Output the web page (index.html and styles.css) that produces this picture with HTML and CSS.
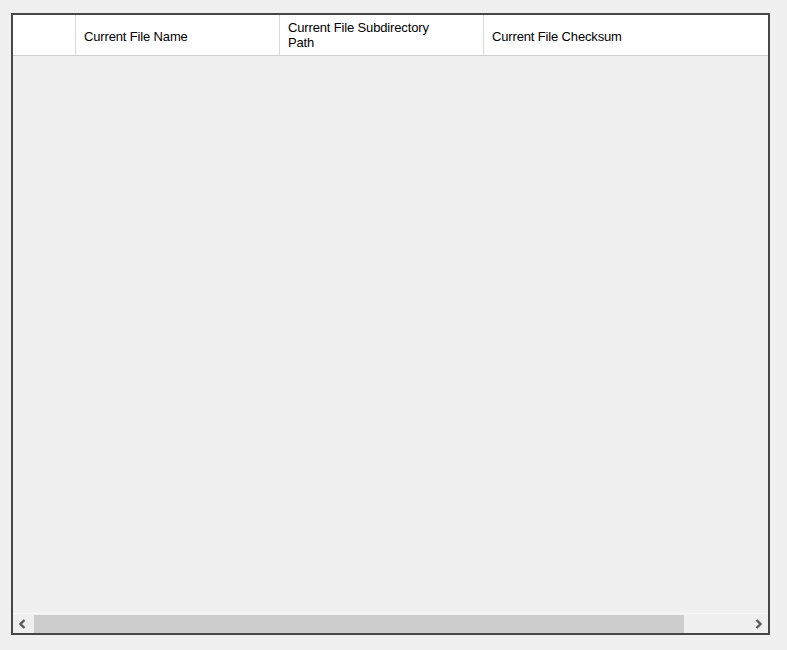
FILE: index.html
```html
<!DOCTYPE html>
<html lang="en">
<head>
    <meta charset="UTF-8">
    <title>File List</title>
    <link rel="stylesheet" href="styles.css">
</head>
<body>
    <div class="listview">
        <div class="header">
            <div class="col col-blank"></div>
            <div class="col col-name">Current File Name</div>
            <div class="col col-path">Current File Subdirectory<br>Path</div>
            <div class="col col-sum">Current File Checksum</div>
        </div>

        <div class="rows"></div>

        <div class="hscroll">
            <div class="arrow arrow-left">
                <svg width="9" height="10" viewBox="0 0 9 10"><path d="M6.5 1 L2.5 5 L6.5 9" fill="none" stroke="#5a5a5a" stroke-width="2.4"/></svg>
            </div>
            <div class="track">
                <div class="thumb"></div>
            </div>
            <div class="arrow arrow-right">
                <svg width="9" height="10" viewBox="0 0 9 10"><path d="M2.5 1 L6.5 5 L2.5 9" fill="none" stroke="#5a5a5a" stroke-width="2.4"/></svg>
            </div>
        </div>
    </div>
</body>
</html>
```

FILE: styles.css
```css
body {
    margin: 0;
    padding: 13px 0 0 11px;
    background-color: #f0f0f0;
    font-family: "Liberation Sans", Arial, sans-serif;
    font-size: 13px;
    color: #000;
}
.listview {
    width: 759px;
    height: 622px;
    box-sizing: border-box;
    border: 2px solid #474747;
    display: flex;
    flex-direction: column;
    background-color: #f0f0f0;
}
.header {
    display: flex;
    height: 41px;
    box-sizing: border-box;
    background-color: #fff;
    border-bottom: 1px solid #cfcfcf;
}
.col {
    box-sizing: border-box;
    border-right: 1px solid #d9d9d9;
    padding-left: 8px;
    padding-top: 2px;
    display: flex;
    align-items: center;
    line-height: 15px;
    letter-spacing: -0.15px;
}
.col-blank { width: 63px; }
.col-name { width: 204px; }
.col-path { width: 204px; align-items: flex-start; padding-top: 5px; }
.col-sum { flex: 1; border-right: none; }
.rows {
    flex: 1;
}
.hscroll {
    height: 20px;
    display: flex;
    background-color: #f0f0f0;
    border-top: 1px solid #f8f8f8;
    box-sizing: border-box;
}
.arrow {
    width: 21px;
    display: flex;
    align-items: center;
    justify-content: center;
}
.arrow-left { padding-right: 2px; box-sizing: border-box; }
.arrow-right { padding-left: 2px; box-sizing: border-box; }
.track {
    flex: 1;
    padding-top: 1px;
}
.thumb {
    width: 650px;
    height: 100%;
    background-color: #cdcdcd;
}
```
